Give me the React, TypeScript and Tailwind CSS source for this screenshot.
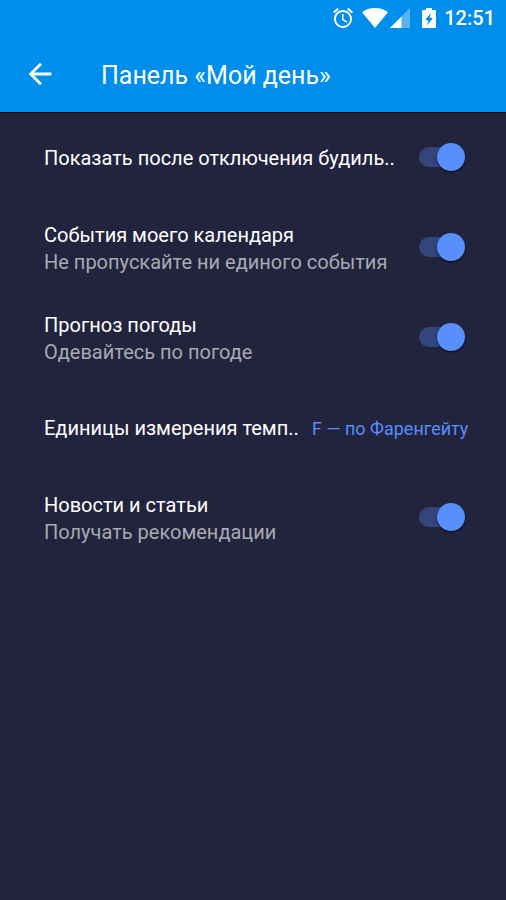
import { useState } from 'react';
import { MdArrowBack, MdAccessAlarm } from 'react-icons/md';

type Setting = {
  id: string;
  title: string;
  subtitle?: string;
  kind: 'switch' | 'units';
};

const settings: Setting[] = [
  { id: 'alarm', title: 'Показать после отключения будиль..', kind: 'switch' },
  { id: 'calendar', title: 'События моего календаря', subtitle: 'Не пропускайте ни единого события', kind: 'switch' },
  { id: 'weather', title: 'Прогноз погоды', subtitle: 'Одевайтесь по погоде', kind: 'switch' },
  { id: 'units', title: 'Единицы измерения темп..', kind: 'units' },
  { id: 'news', title: 'Новости и статьи', subtitle: 'Получать рекомендации', kind: 'switch' },
];

function StatusBar() {
  return (
    <div className="flex h-9 items-center justify-end pr-[11px]">
      <MdAccessAlarm className="size-6" />
      <svg className="ml-[7px] h-5 w-[26px]" viewBox="0 0 26 20" fill="currentColor" aria-hidden="true">
        <path d="M13 20 0 4.200C3.400 1.500 8 0 13 0s9.600 1.500 13 4.200z" />
      </svg>
      <svg className="ml-0.5 size-5" viewBox="0 0 20 20" fill="currentColor" aria-hidden="true">
        <path d="M0 20 20 0v20z" opacity=".35" />
        <path d="M0 20 11.500 8.500V20z" />
      </svg>
      <svg className="ml-3 h-5 w-3.5" viewBox="0 0 14 20" fill="currentColor" fillRule="evenodd" aria-hidden="true">
        <path d="M1.300 2H4V0h6v2h2.700C13.400 2 14 2.600 14 3.300v15.400c0 .7-.6 1.300-1.300 1.300H1.300C.6 20 0 19.400 0 18.700V3.300C0 2.600.6 2 1.300 2zM9 4.800 3.300 11.800l3.200.9-1.700 5L10.800 10.300l-3.200-.9z" />
      </svg>
      <span className="ml-2 text-xl font-medium">12:51</span>
    </div>
  );
}

function Switch({ id, checked, onChange }: { id: string; checked: boolean; onChange: (value: boolean) => void }) {
  return (
    <input
      id={id}
      type="checkbox"
      role="switch"
      checked={checked}
      onChange={(e) => onChange(e.target.checked)}
      className="mr-1 flex h-5 w-[46px] shrink-0 cursor-pointer appearance-none items-center rounded-full bg-[linear-gradient(to_right,#33457a_40px,transparent_40px)] before:size-7 before:rounded-full before:bg-gray-400 before:shadow-[0_1px_2px_rgba(0,0,0,0.8)] checked:justify-end checked:before:bg-[#588ffc]"
    />
  );
}

export default function App() {
  const [enabled, setEnabled] = useState<Record<string, boolean>>({
    alarm: true,
    calendar: true,
    weather: true,
    news: true,
  });
  const [units, setUnits] = useState('f');

  return (
    <div className="min-h-screen bg-[#22233d] font-[Roboto,sans-serif] text-white">
      <header className="bg-[#008eec] shadow-[0_1px_1px_rgba(0,0,0,0.8)]">
        <StatusBar />
        <div className="flex h-19 items-center pl-[23px]">
          <button type="button" aria-label="Назад" className="cursor-pointer">
            <MdArrowBack className="size-[34px]" />
          </button>
          <h1 className="ml-11 pt-[3px] text-[25px]">Панель «Мой день»</h1>
        </div>
      </header>

      <main>
        {settings.map((item) => (
          <div key={item.id} className="flex h-[90px] items-center gap-4 pr-[37px] pl-11">
            <label htmlFor={item.id} className="min-w-0 flex-1 pt-[3px] text-xl leading-[27px] whitespace-nowrap">
              {item.title}
              {item.subtitle && <span className="block text-[#a9a9b2]">{item.subtitle}</span>}
            </label>
            {item.kind === 'switch' ? (
              <Switch
                id={item.id}
                checked={enabled[item.id]}
                onChange={(value) => setEnabled((prev) => ({ ...prev, [item.id]: value }))}
              />
            ) : (
              <select
                id={item.id}
                value={units}
                onChange={(e) => setUnits(e.target.value)}
                className="shrink-0 cursor-pointer appearance-none bg-transparent pt-[3px] text-lg text-[#588ffc]"
              >
                <option value="f">F — по Фаренгейту</option>
                <option value="c">C — по Цельсию</option>
              </select>
            )}
          </div>
        ))}
      </main>
    </div>
  );
}
